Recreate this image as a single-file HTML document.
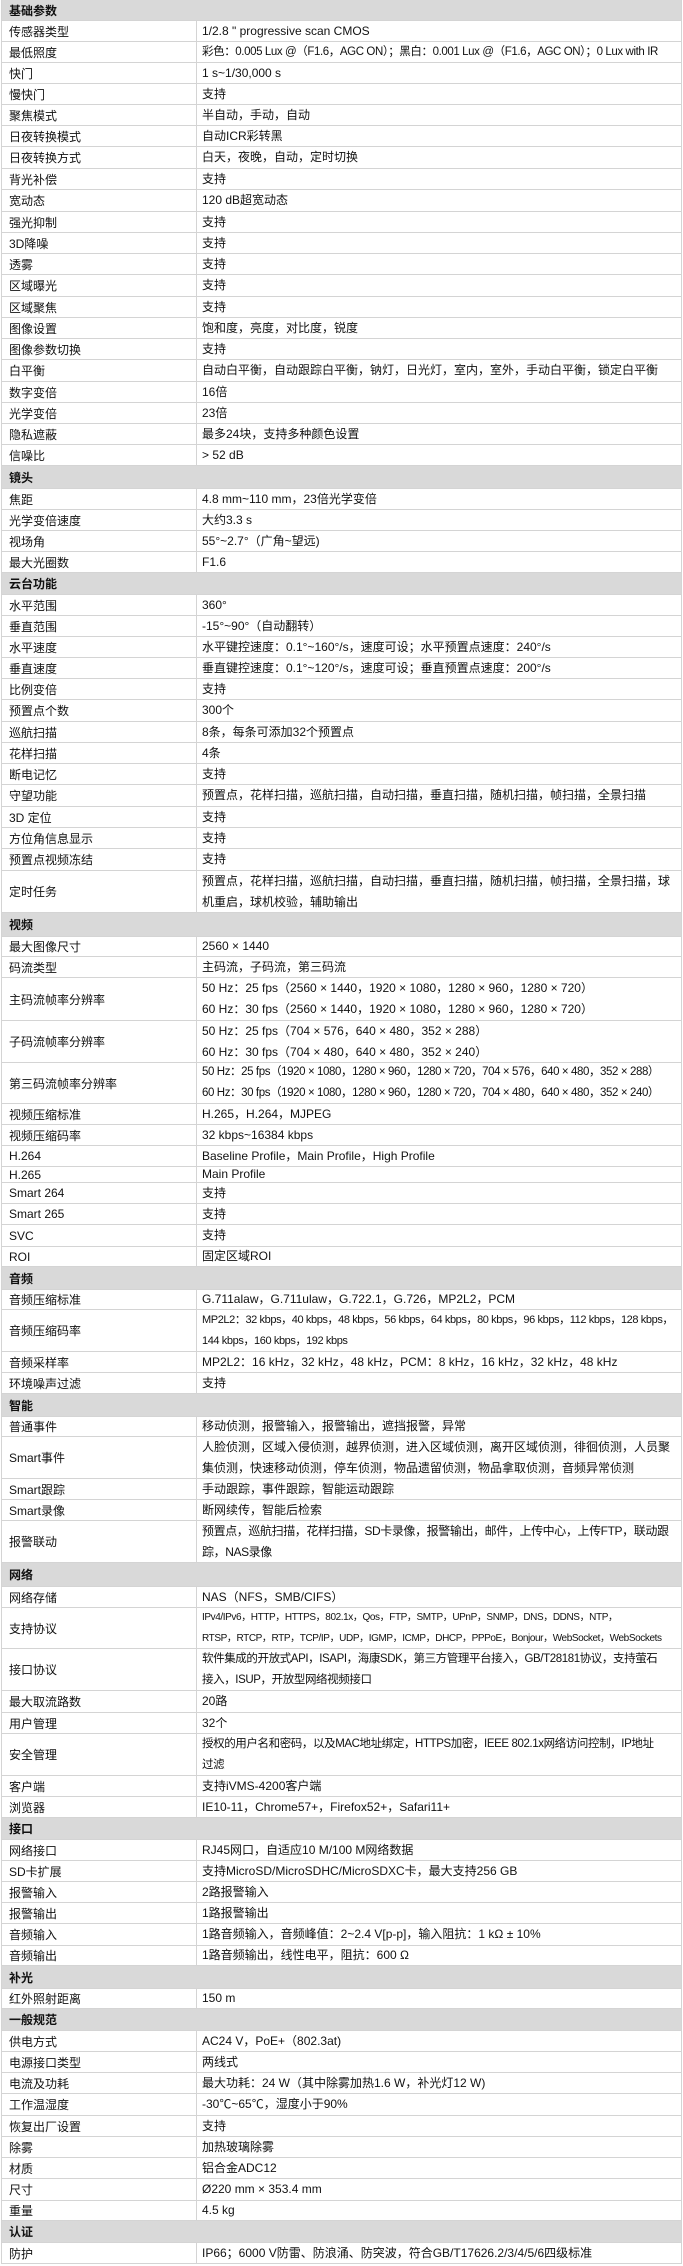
<!DOCTYPE html>
<html><head><meta charset="utf-8"><style>
*{margin:0;padding:0;box-sizing:border-box}
body{width:683px;height:2266px;background:#fff;font-family:"Liberation Sans","Noto Sans CJK SC",sans-serif;font-size:12px;color:#111;overflow:hidden}
.t{position:absolute;left:1px;top:0;width:681px;border-left:1px solid #d4d4d4;border-right:1px solid #d4d4d4}
.r{display:flex;height:21px;border-bottom:1px solid #d4d4d4}
.k{width:195px;border-right:1px solid #d4d4d4;padding-left:7px;display:flex;align-items:center;white-space:nowrap;overflow:hidden}
.v{flex:1;padding-left:5px;display:flex;align-items:center;white-space:nowrap;overflow:hidden;line-height:21px}
.n{letter-spacing:-0.4px}
.h{background:#d9d9d9;font-weight:bold;padding-left:7px;display:flex;align-items:center;border-bottom:1px solid #d4d4d4}
</style></head><body><div class="t">
<div class="h" style="height:21px">基础参数</div>
<div class="r"><div class="k">传感器类型</div><div class="v">1/2.8 " progressive scan CMOS</div></div>
<div class="r"><div class="k">最低照度</div><div class="v n" style="font-size:11.5px">彩色：0.005 Lux @（F1.6，AGC ON）；黑白：0.001 Lux @（F1.6，AGC ON）；0 Lux with IR</div></div>
<div class="r"><div class="k">快门</div><div class="v">1 s~1/30,000 s</div></div>
<div class="r"><div class="k">慢快门</div><div class="v">支持</div></div>
<div class="r"><div class="k">聚焦模式</div><div class="v">半自动，手动，自动</div></div>
<div class="r"><div class="k">日夜转换模式</div><div class="v">自动ICR彩转黑</div></div>
<div class="r" style="height:22px"><div class="k">日夜转换方式</div><div class="v">白天，夜晚，自动，定时切换</div></div>
<div class="r"><div class="k">背光补偿</div><div class="v">支持</div></div>
<div class="r" style="height:22px"><div class="k">宽动态</div><div class="v">120 dB超宽动态</div></div>
<div class="r"><div class="k">强光抑制</div><div class="v">支持</div></div>
<div class="r"><div class="k">3D降噪</div><div class="v">支持</div></div>
<div class="r"><div class="k">透雾</div><div class="v">支持</div></div>
<div class="r" style="height:22px"><div class="k">区域曝光</div><div class="v">支持</div></div>
<div class="r"><div class="k">区域聚焦</div><div class="v">支持</div></div>
<div class="r"><div class="k">图像设置</div><div class="v">饱和度，亮度，对比度，锐度</div></div>
<div class="r"><div class="k">图像参数切换</div><div class="v">支持</div></div>
<div class="r" style="height:22px"><div class="k">白平衡</div><div class="v">自动白平衡，自动跟踪白平衡，钠灯，日光灯，室内，室外，手动白平衡，锁定白平衡</div></div>
<div class="r"><div class="k">数字变倍</div><div class="v">16倍</div></div>
<div class="r"><div class="k">光学变倍</div><div class="v">23倍</div></div>
<div class="r"><div class="k">隐私遮蔽</div><div class="v">最多24块，支持多种颜色设置</div></div>
<div class="r"><div class="k">信噪比</div><div class="v">&gt; 52 dB</div></div>
<div class="h" style="height:23px">镜头</div>
<div class="r"><div class="k">焦距</div><div class="v">4.8 mm~110 mm，23倍光学变倍</div></div>
<div class="r"><div class="k">光学变倍速度</div><div class="v">大约3.3 s</div></div>
<div class="r"><div class="k">视场角</div><div class="v">55°~2.7°（广角~望远)</div></div>
<div class="r"><div class="k">最大光圈数</div><div class="v">F1.6</div></div>
<div class="h" style="height:22px">云台功能</div>
<div class="r"><div class="k">水平范围</div><div class="v">360°</div></div>
<div class="r"><div class="k">垂直范围</div><div class="v">-15°~90°（自动翻转）</div></div>
<div class="r"><div class="k">水平速度</div><div class="v">水平键控速度：0.1°~160°/s，速度可设；水平预置点速度：240°/s</div></div>
<div class="r"><div class="k">垂直速度</div><div class="v">垂直键控速度：0.1°~120°/s，速度可设；垂直预置点速度：200°/s</div></div>
<div class="r"><div class="k">比例变倍</div><div class="v">支持</div></div>
<div class="r" style="height:22px"><div class="k">预置点个数</div><div class="v">300个</div></div>
<div class="r"><div class="k">巡航扫描</div><div class="v">8条，每条可添加32个预置点</div></div>
<div class="r"><div class="k">花样扫描</div><div class="v">4条</div></div>
<div class="r"><div class="k">断电记忆</div><div class="v">支持</div></div>
<div class="r" style="height:22px"><div class="k">守望功能</div><div class="v">预置点，花样扫描，巡航扫描，自动扫描，垂直扫描，随机扫描，帧扫描，全景扫描</div></div>
<div class="r"><div class="k">3D 定位</div><div class="v">支持</div></div>
<div class="r"><div class="k">方位角信息显示</div><div class="v">支持</div></div>
<div class="r" style="height:22px"><div class="k">预置点视频冻结</div><div class="v">支持</div></div>
<div class="r" style="height:42px"><div class="k">定时任务</div><div class="v">预置点，花样扫描，巡航扫描，自动扫描，垂直扫描，随机扫描，帧扫描，全景扫描，球<br>机重启，球机校验，辅助输出</div></div>
<div class="h" style="height:24px">视频</div>
<div class="r" style="height:20px"><div class="k">最大图像尺寸</div><div class="v">2560 × 1440</div></div>
<div class="r"><div class="k">码流类型</div><div class="v">主码流，子码流，第三码流</div></div>
<div class="r" style="height:43px"><div class="k">主码流帧率分辨率</div><div class="v">50 Hz：25 fps（2560 × 1440，1920 × 1080，1280 × 960，1280 × 720）<br>60 Hz：30 fps（2560 × 1440，1920 × 1080，1280 × 960，1280 × 720）</div></div>
<div class="r" style="height:42px"><div class="k">子码流帧率分辨率</div><div class="v">50 Hz：25 fps（704 × 576，640 × 480，352 × 288）<br>60 Hz：30 fps（704 × 480，640 × 480，352 × 240）</div></div>
<div class="r" style="height:41px"><div class="k">第三码流帧率分辨率</div><div class="v n" style="font-size:11.5px">50 Hz：25 fps（1920 × 1080，1280 × 960，1280 × 720，704 × 576，640 × 480，352 × 288）<br>60 Hz：30 fps（1920 × 1080，1280 × 960，1280 × 720，704 × 480，640 × 480，352 × 240）</div></div>
<div class="r"><div class="k">视频压缩标准</div><div class="v">H.265，H.264，MJPEG</div></div>
<div class="r"><div class="k">视频压缩码率</div><div class="v">32 kbps~16384 kbps</div></div>
<div class="r"><div class="k">H.264</div><div class="v">Baseline Profile，Main Profile，High Profile</div></div>
<div class="r" style="height:16px"><div class="k">H.265</div><div class="v">Main Profile</div></div>
<div class="r"><div class="k">Smart 264</div><div class="v">支持</div></div>
<div class="r"><div class="k">Smart 265</div><div class="v">支持</div></div>
<div class="r" style="height:22px"><div class="k">SVC</div><div class="v">支持</div></div>
<div class="r" style="height:20px"><div class="k">ROI</div><div class="v">固定区域ROI</div></div>
<div class="h" style="height:23px">音频</div>
<div class="r" style="height:20px"><div class="k">音频压缩标准</div><div class="v">G.711alaw，G.711ulaw，G.722.1，G.726，MP2L2，PCM</div></div>
<div class="r" style="height:42px"><div class="k">音频压缩码率</div><div class="v n" style="font-size:11px">MP2L2：32 kbps，40 kbps，48 kbps，56 kbps，64 kbps，80 kbps，96 kbps，112 kbps，128 kbps，<br>144 kbps，160 kbps，192 kbps</div></div>
<div class="r"><div class="k">音频采样率</div><div class="v">MP2L2：16 kHz，32 kHz，48 kHz，PCM：8 kHz，16 kHz，32 kHz，48 kHz</div></div>
<div class="r"><div class="k">环境噪声过滤</div><div class="v">支持</div></div>
<div class="h" style="height:23px">智能</div>
<div class="r" style="height:20px"><div class="k">普通事件</div><div class="v">移动侦测，报警输入，报警输出，遮挡报警，异常</div></div>
<div class="r" style="height:42px"><div class="k">Smart事件</div><div class="v">人脸侦测，区域入侵侦测，越界侦测，进入区域侦测，离开区域侦测，徘徊侦测，人员聚<br>集侦测，快速移动侦测，停车侦测，物品遗留侦测，物品拿取侦测，音频异常侦测</div></div>
<div class="r"><div class="k">Smart跟踪</div><div class="v">手动跟踪，事件跟踪，智能运动跟踪</div></div>
<div class="r"><div class="k">Smart录像</div><div class="v">断网续传，智能后检索</div></div>
<div class="r" style="height:42px"><div class="k">报警联动</div><div class="v n">预置点，巡航扫描，花样扫描，SD卡录像，报警输出，邮件，上传中心，上传FTP，联动跟<br>踪，NAS录像</div></div>
<div class="h" style="height:24px">网络</div>
<div class="r"><div class="k">网络存储</div><div class="v">NAS（NFS，SMB/CIFS）</div></div>
<div class="r" style="height:41px"><div class="k">支持协议</div><div class="v n" style="font-size:10px">IPv4/IPv6，HTTP，HTTPS，802.1x，Qos，FTP，SMTP，UPnP，SNMP，DNS，DDNS，NTP，<br>RTSP，RTCP，RTP，TCP/IP，UDP，IGMP，ICMP，DHCP，PPPoE，Bonjour，WebSocket，WebSockets</div></div>
<div class="r" style="height:42px"><div class="k">接口协议</div><div class="v n" style="font-size:11.5px">软件集成的开放式API，ISAPI，海康SDK，第三方管理平台接入，GB/T28181协议，支持萤石<br>接入，ISUP，开放型网络视频接口</div></div>
<div class="r" style="height:22px"><div class="k">最大取流路数</div><div class="v">20路</div></div>
<div class="r"><div class="k">用户管理</div><div class="v">32个</div></div>
<div class="r" style="height:42px"><div class="k">安全管理</div><div class="v n" style="font-size:11.5px">授权的用户名和密码，以及MAC地址绑定，HTTPS加密，IEEE 802.1x网络访问控制，IP地址<br>过滤</div></div>
<div class="r"><div class="k">客户端</div><div class="v">支持iVMS-4200客户端</div></div>
<div class="r"><div class="k">浏览器</div><div class="v">IE10-11，Chrome57+，Firefox52+，Safari11+</div></div>
<div class="h" style="height:22px">接口</div>
<div class="r"><div class="k">网络接口</div><div class="v">RJ45网口，自适应10 M/100 M网络数据</div></div>
<div class="r"><div class="k">SD卡扩展</div><div class="v">支持MicroSD/MicroSDHC/MicroSDXC卡，最大支持256 GB</div></div>
<div class="r"><div class="k">报警输入</div><div class="v">2路报警输入</div></div>
<div class="r"><div class="k">报警输出</div><div class="v">1路报警输出</div></div>
<div class="r" style="height:22px"><div class="k">音频输入</div><div class="v">1路音频输入，音频峰值：2~2.4 V[p-p]，输入阻抗：1 kΩ ± 10%</div></div>
<div class="r" style="height:20px"><div class="k">音频输出</div><div class="v">1路音频输出，线性电平，阻抗：600 Ω</div></div>
<div class="h" style="height:23px">补光</div>
<div class="r" style="height:20px"><div class="k">红外照射距离</div><div class="v">150 m</div></div>
<div class="h" style="height:22px">一般规范</div>
<div class="r"><div class="k">供电方式</div><div class="v">AC24 V，PoE+（802.3at)</div></div>
<div class="r"><div class="k">电源接口类型</div><div class="v">两线式</div></div>
<div class="r"><div class="k">电流及功耗</div><div class="v">最大功耗：24 W（其中除雾加热1.6 W，补光灯12 W)</div></div>
<div class="r" style="height:22px"><div class="k">工作温湿度</div><div class="v">-30℃~65℃，湿度小于90%</div></div>
<div class="r"><div class="k">恢复出厂设置</div><div class="v">支持</div></div>
<div class="r"><div class="k">除雾</div><div class="v">加热玻璃除雾</div></div>
<div class="r"><div class="k">材质</div><div class="v">铝合金ADC12</div></div>
<div class="r" style="height:22px"><div class="k">尺寸</div><div class="v">Ø220 mm × 353.4 mm</div></div>
<div class="r" style="height:20px"><div class="k">重量</div><div class="v">4.5 kg</div></div>
<div class="h" style="height:22px">认证</div>
<div class="r"><div class="k">防护</div><div class="v">IP66；6000 V防雷、防浪涌、防突波，符合GB/T17626.2/3/4/5/6四级标准</div></div>
</div></body></html>
